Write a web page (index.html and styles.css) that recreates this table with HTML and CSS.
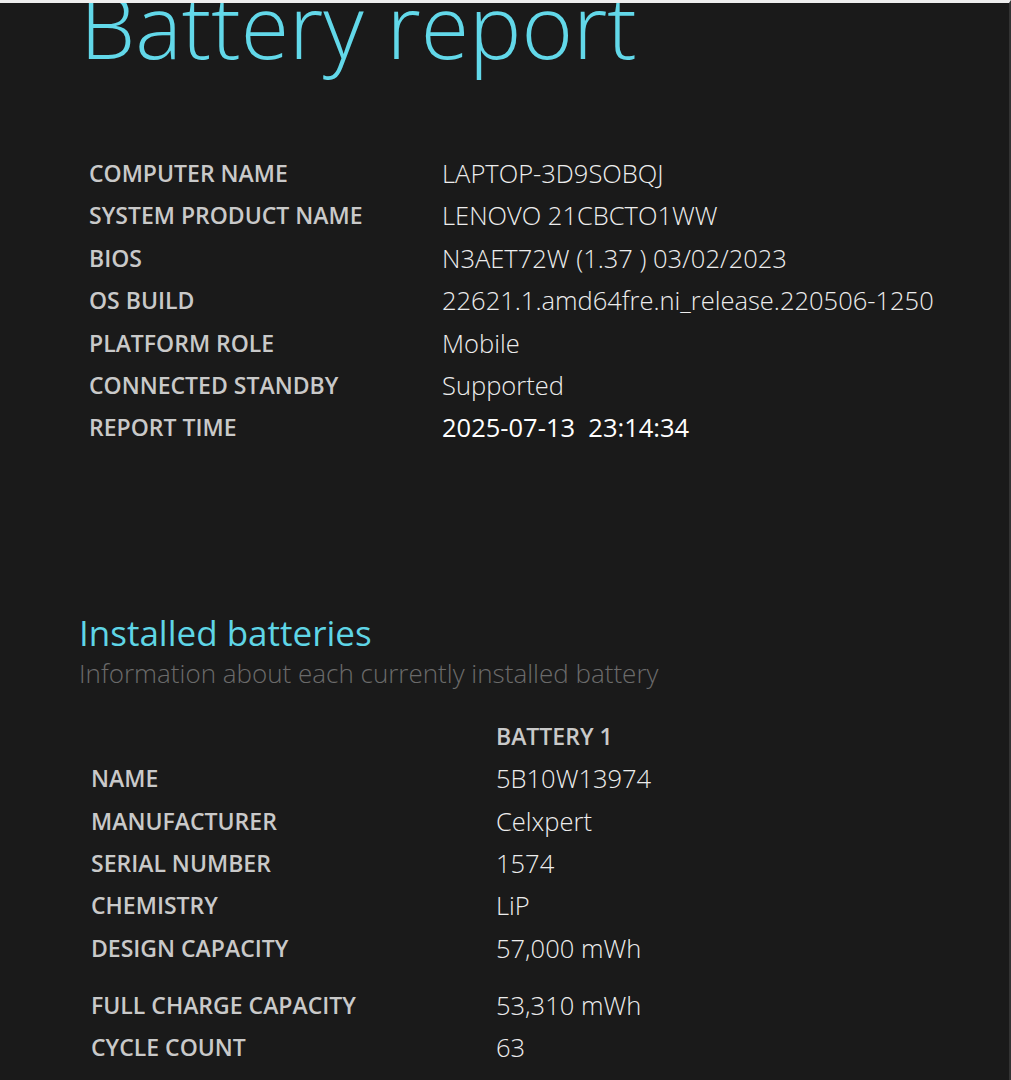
FILE: index.html
```html
<!DOCTYPE html>
<html>
<head>
<meta charset="utf-8">
<link rel="stylesheet" href="styles.css">
</head>
<body>
<div class="page">
  <h1 class="title">Battery report</h1>
  <div class="info">
    <div class="lbl">COMPUTER NAME</div><div class="val">LAPTOP-3D9SOBQJ</div>
    <div class="lbl">SYSTEM PRODUCT NAME</div><div class="val">LENOVO 21CBCTO1WW</div>
    <div class="lbl">BIOS</div><div class="val">N3AET72W (1.37 ) 03/02/2023</div>
    <div class="lbl">OS BUILD</div><div class="val">22621.1.amd64fre.ni_release.220506-1250</div>
    <div class="lbl">PLATFORM ROLE</div><div class="val">Mobile</div>
    <div class="lbl">CONNECTED STANDBY</div><div class="val">Supported</div>
    <div class="lbl">REPORT TIME</div><div class="val strong">2025-07-13 &nbsp;23:14:34</div>
  </div>
  <h2 class="section">Installed batteries</h2>
  <div class="desc">Information about each currently installed battery</div>
  <div class="batt">
    <div class="lbl"></div><div class="head">BATTERY 1</div>
    <div class="lbl">NAME</div><div class="val">5B10W13974</div>
    <div class="lbl">MANUFACTURER</div><div class="val">Celxpert</div>
    <div class="lbl">SERIAL NUMBER</div><div class="val">1574</div>
    <div class="lbl">CHEMISTRY</div><div class="val">LiP</div>
    <div class="lbl">DESIGN CAPACITY</div><div class="val">57,000 mWh</div>
    <div class="lbl gap">FULL CHARGE CAPACITY</div><div class="val gap">53,310 mWh</div>
    <div class="lbl">CYCLE COUNT</div><div class="val">63</div>
  </div>
</div>
</body>
</html>
```
FILE: styles.css
```css
html, body {
  margin: 0;
  padding: 0;
  background: #1a1a1a;
}
.page {
  height: 1077px;
  border-top: 3px solid #eeeeee;
  border-right: 2px solid #333;
  overflow: hidden;
  font-family: "Open Sans", "Noto Sans", sans-serif;
}
.title {
  margin: -33px 0 0 80px;
  font-size: 88px;
  font-weight: 300;
  line-height: 110px;
  color: #62d8e9;
}
.info {
  display: grid;
  grid-template-columns: 353px auto;
  margin: 72px 0 0 89px;
}
.lbl {
  font-size: 23px;
  font-weight: 600;
  color: #c9c9c9;
  height: 42.4px;
  line-height: 42px;
  white-space: nowrap;
}
.val {
  font-size: 25.5px;
  font-weight: 300;
  color: #ededed;
  height: 42.4px;
  line-height: 42px;
  white-space: nowrap;
}
.val.strong {
  font-weight: 400;
  color: #ffffff;
}
.section {
  margin: 162px 0 0 79px;
  font-size: 35px;
  font-weight: 400;
  color: #5fd5e6;
  line-height: 44px;
}
.desc {
  margin: 1px 0 0 79px;
  font-size: 26px;
  font-weight: 300;
  color: #6b6b6b;
  line-height: 34px;
  white-space: nowrap;
}
.batt {
  display: grid;
  grid-template-columns: 405px auto;
  margin: 25px 0 0 91px;
}
.head {
  font-size: 23px;
  font-weight: 600;
  color: #c9c9c9;
  height: 42px;
  line-height: 42px;
}
.gap {
  margin-top: 15px;
}
```
